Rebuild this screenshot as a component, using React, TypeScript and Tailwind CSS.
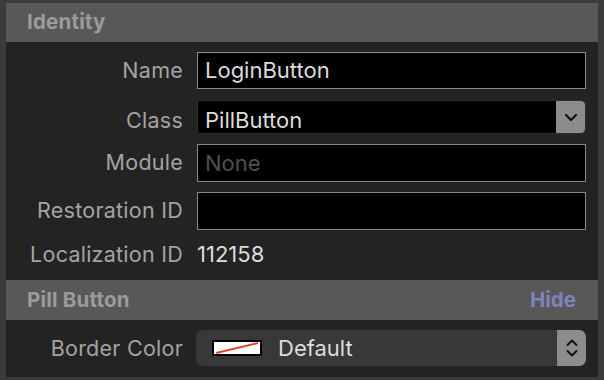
import React from "react";

const font = { fontFamily: "Inter, 'Noto Sans', sans-serif" };

function Label({ children, extra = "" }: { children: React.ReactNode; extra?: string }) {
  return (
    <div className={"text-right text-[21.5px] tracking-[0.25px] text-[#a3a3a3] leading-none " + extra}>{children}</div>
  );
}

export default function App() {
  return (
    <div className="w-[604px] h-[380px] bg-[#3b3b3b] pt-[3px] pl-[6px] pr-[6px] pb-[3px]" style={font}>
      <div className="w-full h-full bg-[#232323] flex flex-col">
        <div className="h-[39px] bg-[#585858] flex items-center pl-[21px]">
          <span className="text-[20.5px] font-bold tracking-[0.2px] text-[#9b9b9b]">Identity</span>
        </div>
        <div className="grid grid-cols-[177px_1fr] gap-x-[14px] items-center pr-[12px] pt-[10px]">
          <Label extra="pt-[1px]">Name</Label>
          <div className="h-[37px] bg-black border border-[#8a8a8a] flex items-center pl-[7px] text-[22px] text-[#dcdcdc]">
            LoginButton
          </div>
          <div className="col-span-2 h-[11px]" />
          <Label extra="pt-[8px]">Class</Label>
          <div className="h-[34px] bg-black border border-[#2e2e2e] rounded-r-[4px] flex items-center">
            <div className="flex-1 pl-[7px] pt-[6px] text-[22px] text-[#dcdcdc]">PillButton</div>
            <div className="w-[29px] h-full bg-[#8c8c8c] rounded-r-[4px] flex items-center justify-center">
              <svg width="14" height="9" viewBox="0 0 14 9">
                <path d="M2 2 L7 7 L12 2" stroke="#111" strokeWidth="2.2" fill="none" strokeLinecap="round" strokeLinejoin="round" />
              </svg>
            </div>
          </div>
          <div className="col-span-2 h-[10px]" />
          <Label>Module</Label>
          <div className="h-[38px] bg-black border border-[#8a8a8a] flex items-center pl-[7px] text-[22px] text-[#505050]">
            None
          </div>
          <div className="col-span-2 h-[10px]" />
          <Label>Restoration ID</Label>
          <div className="h-[38px] bg-black border border-[#8a8a8a]" />
          <div className="col-span-2 h-[10px]" />
          <Label extra="pt-[1px]">Localization ID</Label>
          <div className="h-[28px] pt-[1px] flex items-center text-[22px] text-[#dcdcdc]">112158</div>
        </div>
        <div className="mt-[12px] h-[40px] bg-[#585858] flex items-center justify-between pl-[21px] pr-[22px]">
          <span className="text-[20.5px] font-bold tracking-[0.2px] text-[#9b9b9b]">Pill Button</span>
          <span className="text-[20.5px] font-bold text-[#7f83bd]">Hide</span>
        </div>
        <div className="grid grid-cols-[177px_1fr] gap-x-[14px] items-center pr-[12px] pt-[10px]">
          <Label extra="pt-[1px]">Border Color</Label>
          <div className="h-[36px] -ml-[1px] bg-[#383838] rounded-[7px] flex items-center overflow-hidden">
            <div className="flex-1 flex items-center pl-[16px]">
              <svg width="50" height="16" viewBox="0 0 50 16" className="shrink-0">
                <rect x="1" y="1" width="48" height="14" fill="#fff" stroke="#000" strokeWidth="2" />
                <path d="M4 13 L46 3" stroke="#e8412c" strokeWidth="2" />
              </svg>
              <span className="ml-[16px] text-[22px] text-[#dcdcdc]">Default</span>
            </div>
            <div className="w-[29px] h-full bg-[#8c8c8c] flex items-center justify-center">
              <svg width="14" height="22" viewBox="0 0 14 22">
                <path d="M2.5 8 L7 3.5 L11.5 8" stroke="#111" strokeWidth="2" fill="none" strokeLinecap="round" strokeLinejoin="round" />
                <path d="M2.5 14 L7 18.5 L11.5 14" stroke="#111" strokeWidth="2" fill="none" strokeLinecap="round" strokeLinejoin="round" />
              </svg>
            </div>
          </div>
        </div>
      </div>
    </div>
  );
}
